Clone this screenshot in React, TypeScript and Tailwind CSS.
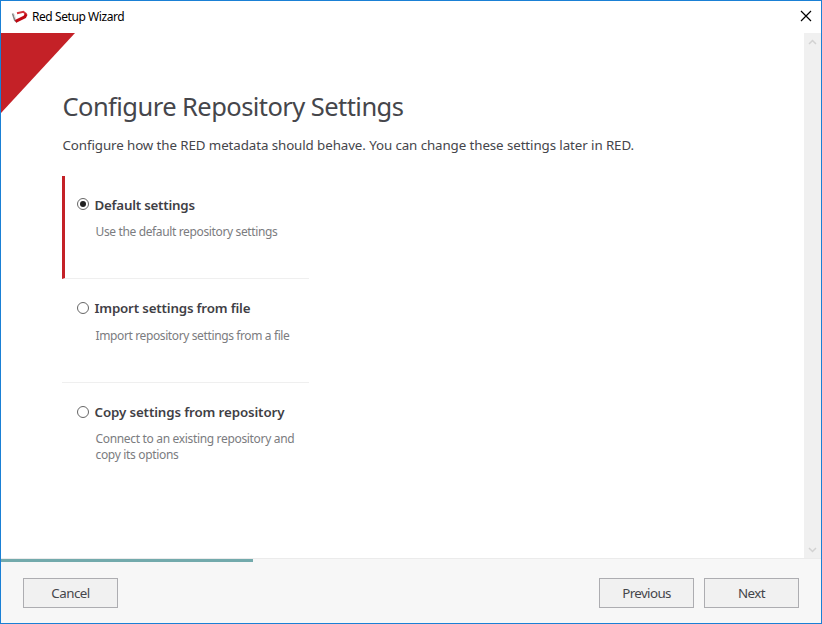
type OptionProps = {
  title: string;
  titleClass: string;
  lines: string[];
  lineClass: string;
  selected?: boolean;
  rowClass: string;
};

function Radio({ checked }: { checked?: boolean }) {
  return (
    <svg width="12" height="12" viewBox="0 0 12 12" className="shrink-0">
      <circle cx="6" cy="6" r="5.5" fill="#fff" stroke="#666" strokeWidth="1" />
      {checked && <circle cx="6" cy="6" r="3" fill="#212121" />}
    </svg>
  );
}

function Option({ title, titleClass, lines, lineClass, selected, rowClass }: OptionProps) {
  return (
    <div className={`w-[247px] ${rowClass}`}>
      <div className="flex h-5 items-center">
        <Radio checked={selected} />
        <span className={`ml-[5.5px] text-[13.33px] leading-5 font-semibold whitespace-nowrap text-[#3f4045] ${titleClass}`}>{title}</span>
      </div>
      <div className={`ml-[18.5px] text-[12px] leading-4 whitespace-nowrap text-[#7b7c80] ${lineClass}`}>
        {lines.map((line) => (
          <div key={line}>{line}</div>
        ))}
      </div>
    </div>
  );
}

function Button({ label, className = "" }: { label: string; className?: string }) {
  return (
    <button className={`flex h-[30px] w-[95px] items-center justify-center border border-[#adadb1] bg-[#f1f1f1] pt-[2px] text-[13.33px] text-[#45464b] ${className}`}>
      {label}
    </button>
  );
}

export default function App() {
  return (
    <div className="flex h-[624px] w-[822px] flex-col border border-[#1a80d5] bg-white font-['Noto_Sans','Open_Sans',sans-serif]">
      <header className="flex h-8 shrink-0 items-center pr-[9px] pl-[10px]">
        <svg width="17" height="14" viewBox="0 0 17 14" fill="none" className="mb-px">
          <path d="M1.6 3.4 3.8 10.2 6 12" stroke="#858585" strokeWidth="1.7" />
          <path d="M3 3.8 4.9 9.5" stroke="#ddd" strokeWidth="1" />
          <path d="M6 3.2 12.3 1.8 15.4 4.2" stroke="#d4343c" strokeWidth="2" />
          <path d="M15.2 4 13.8 6.9 4.6 11.4" stroke="#c00812" strokeWidth="3" />
        </svg>
        <span className="ml-[4px] text-[12px] tracking-[-0.43px] whitespace-nowrap text-black">Red Setup Wizard</span>
        <svg className="mb-[2px] ml-auto" width="12" height="12" viewBox="0 0 12 12">
          <path d="M1 1 11 11M11 1 1 11" stroke="#000" strokeWidth="1.2" />
        </svg>
      </header>

      <main className="flex h-[525px] shrink-0">
        <div className="relative flex-1 pl-[61.5px]">
          <svg className="absolute top-0 left-0" width="75" height="81" viewBox="0 0 75 81">
            <path d="M0 0H74L0 80Z" fill="#c42127" />
          </svg>
          <h1 className="relative pt-[55px] text-[25.5px] leading-9 tracking-[-0.56px] whitespace-nowrap text-[#45464b]">Configure Repository Settings</h1>
          <p className="mt-[11px] text-[13.33px] leading-5 tracking-[-0.09px] whitespace-nowrap text-[#45464b]">
            Configure how the RED metadata should behave. You can change these settings later in RED.
          </p>
          <div className="mt-[21px] -ml-[0.5px]">
            <Option
              selected
              title="Default settings"
              titleClass="pt-[2px] tracking-[-0.22px]"
              lines={["Use the default repository settings"]}
              lineClass="mt-[10px] tracking-[-0.36px]"
              rowClass="h-[103px] border-b border-l-[3px] border-b-[#efefef] border-l-[#c42127] pl-[12px] pt-[18px]"
            />
            <Option
              title="Import settings from file"
              titleClass="tracking-[-0.17px]"
              lines={["Import repository settings from a file"]}
              lineClass="mt-[10px] tracking-[-0.38px]"
              rowClass="h-[104px] border-b border-[#efefef] pl-[15px] pt-[19px]"
            />
            <Option
              title="Copy settings from repository"
              titleClass="tracking-[-0.12px]"
              lines={["Connect to an existing repository and", "copy its options"]}
              lineClass="mt-[9px] tracking-[-0.33px]"
              rowClass="h-[104px] pl-[15px] pt-[19px]"
            />
          </div>
        </div>
        <div className="flex w-[17px] flex-col items-center justify-between bg-[#f0f0f0] pt-[6px] pb-[5px]">
          <svg width="9" height="6" viewBox="0 0 9 6" fill="none">
            <path d="M1 5 4.5 1.5 8 5" stroke="#d2d2d2" strokeWidth="1.5" />
          </svg>
          <svg width="9" height="6" viewBox="0 0 9 6" fill="none">
            <path d="M1 1 4.5 4.5 8 1" stroke="#d2d2d2" strokeWidth="1.5" />
          </svg>
        </div>
      </main>

      <footer className="flex flex-1 flex-col border-t border-[#ebebeb] bg-[#f7f7f7]">
        <div className="h-[3px] w-[252px] bg-[#73aaac]" />
        <div className="flex px-[22px] pt-4">
          <Button label="Cancel" className="tracking-[-0.5px]" />
          <Button label="Previous" className="mr-[10px] ml-auto tracking-[-0.6px]" />
          <Button label="Next" className="tracking-[-0.5px]" />
        </div>
      </footer>
    </div>
  );
}
